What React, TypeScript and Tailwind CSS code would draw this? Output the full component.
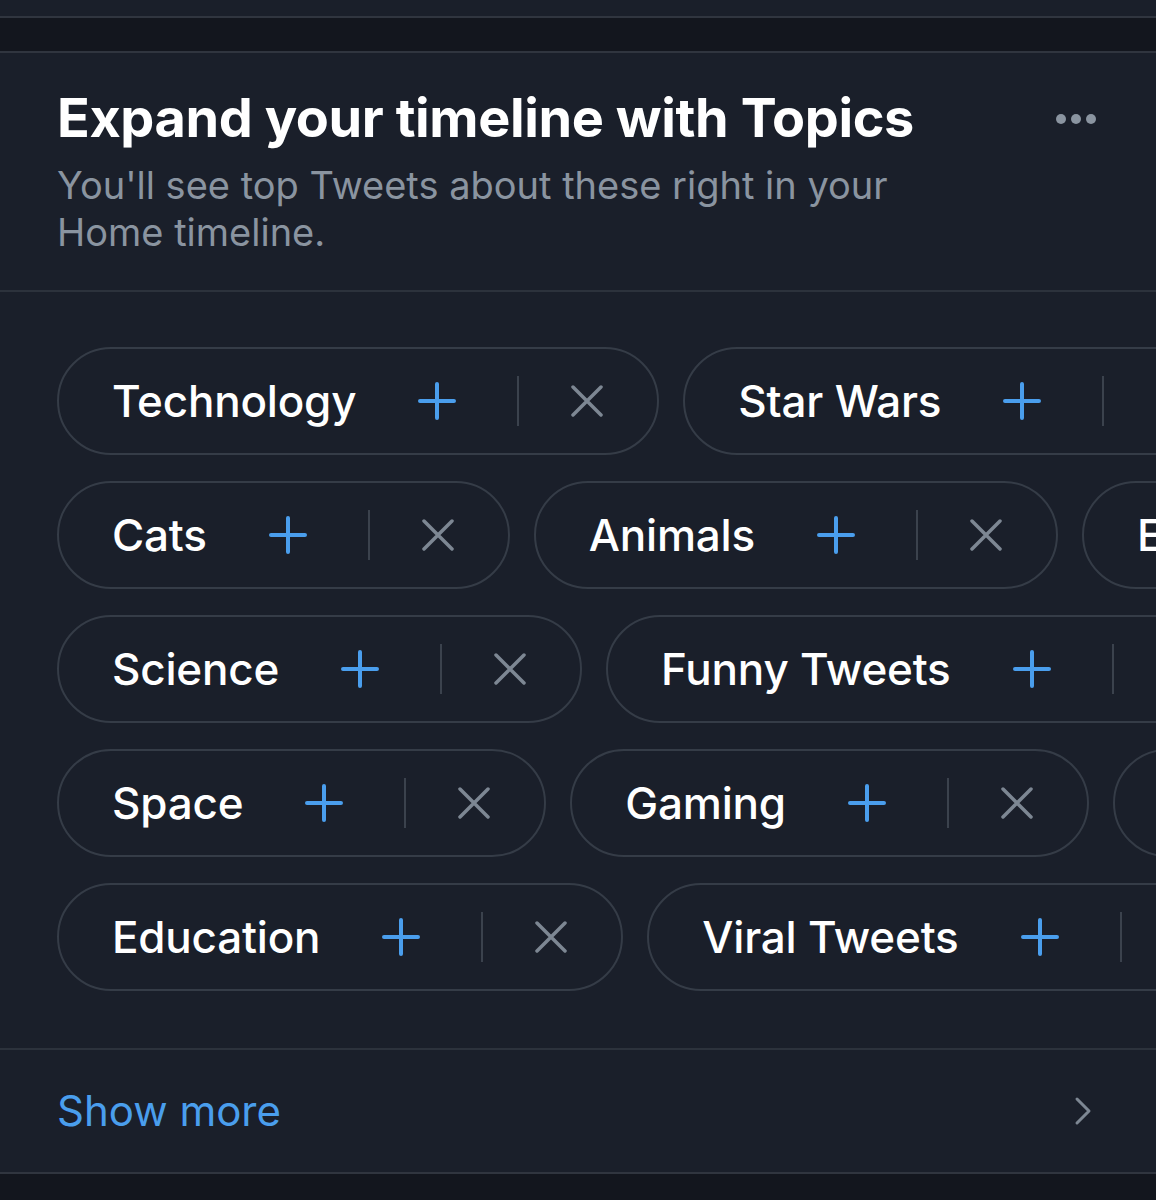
import React from "react";

const rows: string[][] = [
  ["Technology", "Star Wars", "Music"],
  ["Cats", "Animals", "Entertainment"],
  ["Science", "Funny Tweets", "Art"],
  ["Space", "Gaming", "Sports"],
  ["Education", "Viral Tweets", "Food"],
];

function Plus() {
  return (
    <svg width="38" height="38" viewBox="0 0 38 38" className="shrink-0">
      <path d="M19 2v34M2 19h34" stroke="#4a9eed" strokeWidth="4" strokeLinecap="round" />
    </svg>
  );
}

function Cross() {
  return (
    <svg width="32" height="32" viewBox="0 0 32 32" className="shrink-0">
      <path d="M2 2l28 28M30 2L2 30" stroke="#7d8793" strokeWidth="3.5" strokeLinecap="round" />
    </svg>
  );
}

function Chip({ label }: { label: string }) {
  return (
    <div className="flex h-[108px] shrink-0 items-center rounded-full border-2 border-[#353c47] pl-[53px] pr-[54px]">
      <span className="text-[44px] font-medium leading-none tracking-[-0.2px] text-white whitespace-nowrap">{label}</span>
      <div className="ml-[62px]">
        <Plus />
      </div>
      <div className="ml-[61px] h-[50px] w-[2px] bg-[#3b424d]" />
      <div className="ml-[52px]">
        <Cross />
      </div>
    </div>
  );
}

export default function App() {
  return (
    <div className="w-[1156px] h-[1200px] overflow-hidden bg-[#13161e]" style={{ fontFamily: "Inter, 'Noto Sans', sans-serif" }}>
      <div className="h-[18px] bg-[#1a1f2a] border-b-2 border-[#30353f]" />
      <div className="h-[35px] bg-[#13161e] border-b-2 border-[#30353f]" />
      <div className="bg-[#1a1f2a] border-b-2 border-[#30353f]">
        <div className="flex items-start justify-between pl-[57px] pr-[60px] pt-[33px] pb-[34px] border-b-2 border-[#2c323c]">
          <div>
            <div className="text-[54px] font-bold leading-[64px] tracking-[-0.4px] text-white whitespace-nowrap">Expand your timeline with Topics</div>
            <div className="mt-[12px] w-[900px] text-[38px] leading-[47px] text-[#8a94a0]">
              You'll see top Tweets about these right in your Home timeline.
            </div>
          </div>
          <div className="mt-[28px] flex gap-[5px]">
            <span className="block h-[10px] w-[10px] rounded-full bg-[#8a94a0]" />
            <span className="block h-[10px] w-[10px] rounded-full bg-[#8a94a0]" />
            <span className="block h-[10px] w-[10px] rounded-full bg-[#8a94a0]" />
          </div>
        </div>
        <div className="flex flex-col gap-[26px] pl-[57px] pt-[55px] pb-[57px] border-b-2 border-[#2c323c] overflow-hidden">
          {rows.map((r, i) => (
            <div key={i} className="flex gap-[24px] overflow-hidden">
              {r.map((l) => (
                <Chip key={l} label={l} />
              ))}
            </div>
          ))}
        </div>
        <div className="flex h-[122px] items-center justify-between pl-[57px] pr-[64px]">
          <span className="text-[42px] leading-none text-[#4a9eed]">Show more</span>
          <svg width="18" height="30" viewBox="0 0 18 30">
            <path d="M3 3l12 12L3 27" stroke="#7d8793" strokeWidth="3" fill="none" strokeLinecap="round" strokeLinejoin="round" />
          </svg>
        </div>
      </div>
    </div>
  );
}
